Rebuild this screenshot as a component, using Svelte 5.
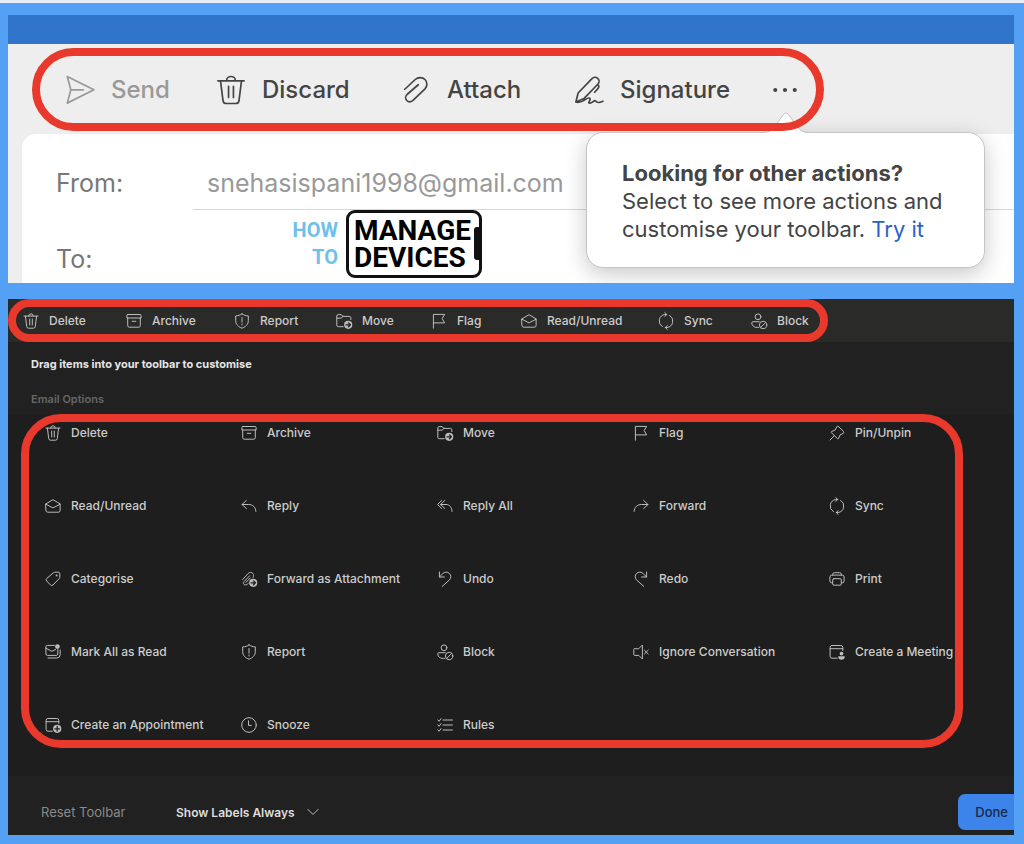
<script lang="ts">
    type icon = { line?: string; solid?: string; cut?: string };
    type action = { title: string; icon: string; disabled?: boolean };

    // all icons are drawn on a 16 x 16 grid
    const badge = "M16.3 11.8a4.1 4.1 0 1 1-8.2 0a4.1 4.1 0 1 1 8.2 0z";
    const badgeArrow = "M10 11.8h4.2M12.5 9.9l1.9 1.9l-1.9 1.9";

    const icons: Record<string, icon> = {
        send: { line: "M1.2 .8L15.4 7.9L1.2 15L3.1 7.9zM3.1 7.9H9.8" },
        trash: { line: "M1 3.1H15M5.7 3a2.3 2.2 0 0 1 4.6 0M2.4 3.1L3.7 13.4a1.9 1.9 0 0 0 1.9 1.8h4.8a1.9 1.9 0 0 0 1.9-1.8L13.6 3.1M6.7 6v6M9.3 6v6" },
        attach: { line: "M2 7.6L7.6 2.4C9 1.1 11.4 1 12.8 2.4C14.2 3.8 14.1 6 12.8 7.4L6.4 13.5C5.4 14.4 4 14.5 3.1 13.6C2.2 12.7 2.3 11.3 3.2 10.4L9.2 5.2" },
        signature: { line: "M1 14.4L2.2 9.6L9.6 1.9a2.1 2.1 0 0 1 3.2 2.9L5.4 12.5L1 14.4M12.6 5c1.4 1.2.3 2.3-1.6 4.2M1 14.4c3.6 1.2 5.6-2.6 7.1-2.1c1.7.6-1.4 2.6.3 2.7c1.6 0 2.2-1.8 3-1.2c.8 1 1.6 1.3 4 .2" },
        more: { solid: "M3.9 8a1.1 1.1 0 1 1-2.2 0a1.1 1.1 0 1 1 2.2 0zM9.1 8a1.1 1.1 0 1 1-2.2 0a1.1 1.1 0 1 1 2.2 0zM14.3 8a1.1 1.1 0 1 1-2.2 0a1.1 1.1 0 1 1 2.2 0z" },
        archive: { line: "M1.9 1.5H14.1a1 1 0 0 1 1 1V5H.9V2.5a1 1 0 0 1 1-1zM1.7 5V12.6a1.6 1.6 0 0 0 1.6 1.6H12.7a1.6 1.6 0 0 0 1.6-1.6V5M6.2 8.3H9.8" },
        report: { line: "M8 .9C10 2.3 12 2.8 14.3 2.9V7.6C14.3 11.4 11.7 13.9 8 15.2C4.3 13.9 1.7 11.4 1.7 7.6V2.9C4 2.8 6 2.3 8 .9zM8 4.5V9.2M8 11V12" },
        move: { line: "M7.2 13.7H2.3A1.5 1.5 0 0 1 .8 12.2V3A1.4 1.4 0 0 1 2.2 1.6H5L7 3.4H13.4A1.4 1.4 0 0 1 14.8 4.8V6.6M.8 5.2H5L7 3.4", solid: badge, cut: badgeArrow },
        flag: { line: "M2.4 15.2V1.4H13.6L11.2 5.6L13.6 9.9H2.4" },
        mail: { line: "M.9 5.9L8 1.7L15.1 5.9V12.4A1.8 1.8 0 0 1 13.3 14.2H2.7A1.8 1.8 0 0 1 .9 12.4zM.9 6.2L8 9.9L15.1 6.2" },
        sync: { line: "M4.4 13.7A6.6 6.6 0 0 1 7 1.5H8.8M6.8-.4L8.8 1.5L6.8 3.4M11.6 2.3A6.6 6.6 0 0 1 9 14.5H7.2M9.2 12.6L7.2 14.5L9.2 16.4" },
        block: { line: "M9.9 3.8a2.9 2.9 0 1 1-5.8 0a2.9 2.9 0 1 1 5.8 0zM7.6 14.4C3.4 14.8.8 13.1.8 9.8A1.2 1.2 0 0 1 2 8.7H8.2M15.8 12a3.7 3.7 0 1 1-7.4 0a3.7 3.7 0 1 1 7.4 0zM9.6 14.5L14.6 9.5" },
        pin: { line: "M9.5 1.5L14.5 6.5C15.1 7.2 14.9 7.9 14.2 8.3L11 10L9.6 13.5L8.6 13.8L2.3 7.5L2.6 6.5L6.1 5.1L7.8 1.8C8.2 1.1 8.9.9 9.5 1.5zM5.4 10.6L1 15" },
        reply: { line: "M5.4 2.4L1 6.5L5.4 10.6M1 6.5H7.5C11.8 6.5 14.7 9.1 14.9 13.4" },
        replyAll: { line: "M4.8 2.4L.6 6.5L4.8 10.6M7.8 2.4L3.6 6.5L7.8 10.6M3.6 6.5H9C12.4 6.5 14.9 9.1 15 13.4" },
        forward: { line: "M10.6 2.4L15 6.5L10.6 10.6M15 6.5H8.5C4.2 6.5 1.3 9.1 1.1 13.4" },
        tag: { line: "M8.5 1.7Q9 1.2 9.7 1.2H13.3A1.5 1.5 0 0 1 14.8 2.7V6.3Q14.8 7 14.3 7.5L8 14A1.7 1.7 0 0 1 5.6 14L1.6 10A1.7 1.7 0 0 1 1.6 7.6z", solid: "M12.6 4.4a1 1 0 1 1-2 0a1 1 0 1 1 2 0z" },
        forwardClip: { line: "M1.6 8.6L7.2 2.4a3.1 3.1 0 0 1 4.7.2c1 1.2.9 2.6.2 3.8M7.2 12.6c-1.5 2-4.7 1.7-4.8-.3c0-.8.4-1.4.9-1.9L8.6 4.8M5 11.4L9.2 7", solid: badge, cut: badgeArrow },
        undo: { line: "M2.4 1V6H7.4M2.4 6L5.9 2.5A4.6 4.6 0 0 1 12.6 8.8L5.2 15.4" },
        redo: { line: "M13.6 1V6H8.6M13.6 6L10.1 2.5A4.6 4.6 0 0 0 3.4 8.8L10.8 15.4" },
        print: { line: "M3.7 4.1V3.4A1.7 1.7 0 0 1 5.4 1.7H10.6A1.7 1.7 0 0 1 12.3 3.4V4.1M3.6 11.8H2.7A1.8 1.8 0 0 1 .9 10V6A1.9 1.9 0 0 1 2.8 4.1H13.2A1.9 1.9 0 0 1 15.1 6V10A1.8 1.8 0 0 1 13.3 11.8H12.4M4.9 7.7H11.1A1.2 1.2 0 0 1 12.3 8.9V12.9A1.3 1.3 0 0 1 11 14.2H5A1.3 1.3 0 0 1 3.7 12.9V8.9A1.2 1.2 0 0 1 4.9 7.7z" },
        markRead: { line: "M9.4 1.4H2.4A1.5 1.5 0 0 0 .9 2.9V9.9A1.5 1.5 0 0 0 2.4 11.4H11.3A1.5 1.5 0 0 0 12.8 9.9V5.6M.9 4.2L6.9 7.4L10.6 5.4M3 14H11.8A3.4 3.4 0 0 0 15.2 10.6V6", solid: "M14.8 2.6a2.4 2.4 0 1 1-4.8 0a2.4 2.4 0 1 1 4.8 0z" },
        ignore: { line: "M5.8 4.6L9.4 1V15L5.8 11.4H1.6A.8.8 0 0 1 .8 10.6V5.4A.8.8 0 0 1 1.6 4.6zM11.4 6.2L15.2 10M15.2 6.2L11.4 10" },
        meeting: { line: "M8.2 14.2H3A1.9 1.9 0 0 1 1.1 12.3V3.4A1.9 1.9 0 0 1 3 1.5H11.9A1.9 1.9 0 0 1 13.8 3.4V6.6M1.1 4.7H13.8", solid: "M14.4 9.6a1.9 1.9 0 1 1-3.8 0a1.9 1.9 0 1 1 3.8 0zM9.6 12.2H15.4Q15.8 12.2 15.8 12.8C15.8 14.8 14.4 15.8 12.5 15.8S9.2 14.8 9.2 12.8Q9.2 12.2 9.6 12.2z" },
        appointment: { line: "M7.4 14.2H3A1.9 1.9 0 0 1 1.1 12.3V3.4A1.9 1.9 0 0 1 3 1.5H11.9A1.9 1.9 0 0 1 13.8 3.4V6.4M1.1 4.7H13.8", solid: badge, cut: "M9.9 11.8h4.6M12.2 9.5v4.6" },
        snooze: { line: "M15.3 8a7.3 7.3 0 1 1-14.6 0a7.3 7.3 0 1 1 14.6 0zM7.5 3.8V8.4H10.4" },
        rules: { line: "M6 3H15.4M6 8H15.4M6 13H15.4M.8 3L2.2 4.2L4 1.6M.8 8L2.2 9.2L4 6.6M.8 13L2.2 14.2L4 11.6" },
        chevron: { line: "M2.9 5.4L8 10.5L13.1 5.4" }
    };

    const compose: action[] = [
        { title: "Send", icon: "send", disabled: true },
        { title: "Discard", icon: "trash" },
        { title: "Attach", icon: "attach" },
        { title: "Signature", icon: "signature" }
    ];

    const toolbar: action[] = [
        { title: "Delete", icon: "trash" },
        { title: "Archive", icon: "archive" },
        { title: "Report", icon: "report" },
        { title: "Move", icon: "move" },
        { title: "Flag", icon: "flag" },
        { title: "Read/Unread", icon: "mail" },
        { title: "Sync", icon: "sync" },
        { title: "Block", icon: "block" }
    ];

    const options: action[] = [
        { title: "Delete", icon: "trash" },
        { title: "Archive", icon: "archive" },
        { title: "Move", icon: "move" },
        { title: "Flag", icon: "flag" },
        { title: "Pin/Unpin", icon: "pin" },
        { title: "Read/Unread", icon: "mail" },
        { title: "Reply", icon: "reply" },
        { title: "Reply All", icon: "replyAll" },
        { title: "Forward", icon: "forward" },
        { title: "Sync", icon: "sync" },
        { title: "Categorise", icon: "tag" },
        { title: "Forward as Attachment", icon: "forwardClip" },
        { title: "Undo", icon: "undo" },
        { title: "Redo", icon: "redo" },
        { title: "Print", icon: "print" },
        { title: "Mark All as Read", icon: "markRead" },
        { title: "Report", icon: "report" },
        { title: "Block", icon: "block" },
        { title: "Ignore Conversation", icon: "ignore" },
        { title: "Create a Meeting", icon: "meeting" },
        { title: "Create an Appointment", icon: "appointment" },
        { title: "Snooze", icon: "snooze" },
        { title: "Rules", icon: "rules" }
    ];

    let from = $state("snehasispani1998@gmail.com");
    let to = $state("");
    let labels = $state("Show Labels Always");
</script>

{#snippet glyph(name: string)}
    <svg class="icon" viewBox="0 0 16 16" aria-hidden="true">
        {#if icons[name].line}<path class="line" d={icons[name].line} />{/if}
        {#if icons[name].solid}<path class="solid" d={icons[name].solid} />{/if}
        {#if icons[name].cut}<path class="cut" d={icons[name].cut} />{/if}
    </svg>
{/snippet}

{#snippet actionButton(item: action)}
    <button class="action" disabled={item.disabled}>
        {@render glyph(item.icon)}
        <span>{item.title}</span>
    </button>
{/snippet}

<main class="page">
    <section class="compose">
        <div class="titlebar"></div>
        <div class="compose-bar">
            <div class="ring compose-actions">
                {#each compose as item}
                    {@render actionButton(item)}
                {/each}
                <button class="action" aria-label="More actions">{@render glyph("more")}</button>
            </div>
        </div>
        <form class="sheet">
            <div class="field">
                <label for="from">From:</label>
                <div class="value"><input id="from" type="text" bind:value={from} /></div>
            </div>
            <div class="field">
                <label for="to">To:</label>
                <div class="value"><input id="to" class="short" type="text" bind:value={to} /></div>
            </div>
        </form>

        <div class="logo">
            <div class="logo-how">
                <div>HOW</div>
                <div>TO</div>
            </div>
            <div class="logo-phone">
                <div>MANAGE</div>
                <div>DEVICES</div>
            </div>
        </div>

        <div class="popover">
            <svg class="popover-tip" viewBox="0 0 48 23" aria-hidden="true">
                <path d="M0 22C9 22 11 18 14 14L21 4Q24 0 27 4L34 14C37 18 39 22 48 22V23H0z" />
                <path class="popover-edge" d="M0 21.5C9 21.5 11 18 14 14L21 4Q24 0 27 4L34 14C37 18 39 21.5 48 21.5" />
            </svg>
            <strong>Looking for other actions?</strong>
            <p>Select to see more actions and customise your toolbar. <a href="#customise">Try it</a></p>
        </div>
    </section>

    <section class="customise" id="customise">
        <div class="window">
            <div class="mail-bar">
                <div class="ring mail-actions">
                    {#each toolbar as item}
                        {@render actionButton(item)}
                    {/each}
                </div>
            </div>
            <h2>Drag items into your toolbar to customise</h2>
            <h3>Email Options</h3>
            <div class="options">
                <div class="ring options-grid">
                    {#each options as item}
                        {@render actionButton(item)}
                    {/each}
                </div>
            </div>
            <footer>
                <button class="reset">Reset Toolbar</button>
                <div class="picker">
                    <select aria-label="Toolbar labels" bind:value={labels}>
                        <option>Show Labels Always</option>
                        <option>Hide Labels</option>
                    </select>
                    {@render glyph("chevron")}
                </div>
                <button class="done">Done</button>
            </footer>
        </div>
    </section>
</main>

<style>
    :global(body) {
        background-color: #53a0f4;
    }

    .page {
        box-sizing: border-box;
        min-height: 100vh;
        border-top: 3px solid #e6edf5;
        padding: 12px 10px 9px 8px;
        display: flex;
        flex-direction: column;
        gap: 16px;
        background-color: #53a0f4;
        font-family: Inter, "Liberation Sans", sans-serif;
    }

    button, input, select {
        font: inherit;
        color: inherit;
        background: none;
        border: none;
        padding: 0;
        margin: 0;
        outline: none;
    }

    button {
        cursor: pointer;
    }

    .icon {
        width: 16px;
        height: 16px;
        flex: none;
        overflow: visible;
        fill: none;
        stroke-linecap: round;
        stroke-linejoin: round;
    }

    .line {
        stroke: currentColor;
        vector-effect: non-scaling-stroke;
    }

    .solid {
        fill: currentColor;
    }

    .cut {
        stroke: #222222;
        stroke-width: 1.3;
    }

    .ring {
        box-sizing: border-box;
        position: relative;
        z-index: 2;
        border: 8px solid #e8392c;
    }

    .action {
        display: flex;
        align-items: center;
        text-align: left;
        white-space: nowrap;
    }

    /* compose window */
    .compose {
        position: relative;
        overflow: hidden;
        background-color: #eeeeee;
        color: #444444;
    }

    .titlebar {
        height: 29px;
        background-color: #3174cb;
    }

    .compose-bar {
        padding: 4px 24px 3px;
    }

    .compose-actions {
        width: fit-content;
        height: 83px;
        border-radius: 42px;
        padding: 0 14px 0 25px;
        display: grid;
        grid-template-columns: 151px 185px 173px 196px 32px;
        align-items: center;
        font-size: 24px;
        font-weight: 500;
    }

    .compose-actions .action {
        gap: 16px;
    }

    .compose-actions .icon {
        width: 30px;
        height: 30px;
        stroke-width: 1.7px;
    }

    .compose-actions .action:disabled {
        color: #999999;
    }

    .sheet {
        margin-left: 14px;
        background-color: #ffffff;
        border-top-left-radius: 14px;
        font-size: 25px;
        line-height: 30px;
        color: #777777;
    }

    .field {
        display: flex;
        padding-left: 34px;
    }

    .field label {
        width: 137px;
        padding-top: 34px;
    }

    .value {
        flex: 1;
        display: flex;
        padding: 34px 0 11px;
        border-bottom: 1px solid #d6d6d6;
    }

    .value input {
        width: 380px;
        height: 30px;
        padding-left: 14px;
        color: #999999;
    }

    .value .short {
        width: 80px;
    }

    .field:last-child .value {
        border-bottom: none;
        padding-bottom: 9px;
    }

    .logo {
        position: absolute;
        left: 284px;
        bottom: 5px;
        display: flex;
        align-items: center;
        gap: 8px;
        font-family: Roboto, "Liberation Sans", sans-serif;
        font-weight: 700;
        line-height: 27px;
    }

    .logo-how {
        width: 46px;
        text-align: right;
        font-size: 20px;
        color: #6fc0e8;
    }

    .logo-phone {
        position: relative;
        border: 3px solid #111111;
        border-radius: 9px;
        padding: 4px 8px 4px 5px;
        font-size: 28px;
        color: #000000;
    }

    .logo-phone::after {
        content: "";
        position: absolute;
        right: 0;
        top: 14px;
        width: 5px;
        height: 33px;
        border-radius: 3px 0 0 3px;
        background-color: #111111;
    }

    .popover {
        box-sizing: border-box;
        position: absolute;
        right: 29px;
        top: 117px;
        width: 399px;
        padding: 26px 34px 24px 35px;
        border: 1px solid #c4c4c4;
        border-radius: 17px;
        background-color: #ffffff;
        box-shadow: 0 6px 22px rgba(0, 0, 0, 0.22);
        font-size: 22px;
        line-height: 28px;
    }

    .popover-tip {
        position: absolute;
        top: -22px;
        left: 175px;
        width: 48px;
        height: 23px;
        fill: #ffffff;
    }

    .popover-edge {
        fill: none;
        stroke: #c4c4c4;
    }

    .popover strong {
        font-weight: 700;
    }

    .popover p {
        margin: 0;
    }

    .popover a {
        color: #2b62c9;
        text-decoration: none;
    }

    /* customise window, its right edge runs on past the frame */
    .customise {
        flex: 1;
        overflow: hidden;
        background-color: #212121;
        color: #cccccc;
        font-size: 12px;
        font-weight: 500;
    }

    .customise .icon {
        color: #bcbcbc;
    }

    .window {
        width: calc(100% + 11px);
    }

    .mail-bar {
        height: 43px;
        background-color: #2a2a29;
    }

    .mail-actions {
        width: fit-content;
        height: 43px;
        border-radius: 22px;
        padding: 0 8px 0 7px;
        display: grid;
        grid-template-columns: 103px 108px 102px 95px 90px 137px 93px 61px;
        align-items: center;
    }

    .mail-actions .action, .options-grid .action {
        gap: 10px;
    }

    h2, h3 {
        margin: 0 23px;
        font-size: 11px;
        line-height: 16px;
    }

    h2 {
        padding-top: 14px;
        font-weight: 700;
        color: #e6e6e6;
    }

    h3 {
        padding-top: 19px;
        font-weight: 600;
        color: #666666;
    }

    .options {
        margin-top: 7px;
        padding: 0 62px 28px 13px;
        background-color: #1e1e1e;
    }

    .options-grid {
        border-radius: 40px;
        padding: 0 0 5px 16px;
        display: grid;
        grid-template-columns: repeat(4, 1fr) 126px;
        grid-auto-rows: 21px;
        row-gap: 52px;
    }

    footer {
        display: flex;
        align-items: center;
        padding-left: 33px;
        padding-top: 18px;
        font-size: 13px;
        color: #dddddd;
    }

    .reset {
        width: 135px;
        text-align: left;
        font-weight: 400;
        color: #8a8a8a;
    }

    .picker {
        display: flex;
        align-items: center;
        font-size: 12px;
        font-weight: 600;
    }

    .picker select {
        appearance: none;
        padding-right: 26px;
        cursor: pointer;
    }

    .picker .icon {
        margin-left: -16px;
        pointer-events: none;
    }

    .done {
        margin-left: auto;
        padding: 0 17px;
        height: 36px;
        border-radius: 7px;
        background-color: #3d84ea;
        color: #15294a;
    }
</style>
